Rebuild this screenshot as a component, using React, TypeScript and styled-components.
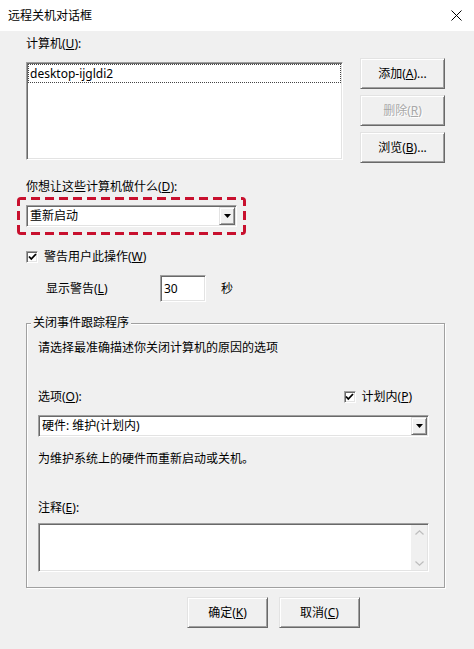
import React from "react";
import styled, { createGlobalStyle, css } from "styled-components";

const Global = createGlobalStyle`
  html, body { margin: 0; padding: 0; background: #f0f0f0; }
  body {
    font-family: "Noto Sans", "Noto Sans CJK SC", sans-serif;
    font-size: 12px;
    line-height: 16px;
    color: #000;
  }
  * { box-sizing: border-box; }
`;

const sunken = css`
  background: #fff;
  border-style: solid;
  border-width: 1px;
  border-color: #a0a0a0 #fff #fff #a0a0a0;
  box-shadow: inset 1px 1px 0 #696969, inset -1px -1px 0 #e3e3e3;
`;

const raised = css`
  background: #f0f0f0;
  border-style: solid;
  border-width: 1px;
  border-color: #e3e3e3 #696969 #696969 #e3e3e3;
  box-shadow: inset 1px 1px 0 #fff, inset -1px -1px 0 #a0a0a0;
`;

const RED = "#c8102e";
const dashH = `repeating-linear-gradient(90deg, ${RED} 0 9px, transparent 9px 14px)`;
const dashV = `repeating-linear-gradient(180deg, ${RED} 0 9px, transparent 9px 14px)`;

const Window = styled.div`
  width: 474px;
  height: 649px;
  display: flex;
  flex-direction: column;
  background: #f0f0f0;
  overflow: hidden;
`;

const TitleBar = styled.div`
  height: 31px;
  flex-shrink: 0;
  background: #fff;
  display: flex;
  align-items: center;
  justify-content: space-between;
  padding: 0 12px 0 8px;
`;

const Title = styled.span`
  font-size: 12px;
`;

const Body = styled.div`
  display: flex;
  flex-direction: column;
  padding: 5px 0 0 26px;
`;

const Label = styled.div<{ $mt?: number }>`
  margin-top: ${(p) => p.$mt ?? 0}px;
  white-space: nowrap;
`;

const TopRow = styled.div`
  display: flex;
  margin-top: 6px;
`;

const ListBox = styled.div`
  ${sunken};
  width: 317px;
  height: 98px;
  margin-top: 4px;
  padding: 1px 1px 0 1px;
`;

const ListItem = styled.div`
  height: 19px;
  border: 1px dotted #444;
  padding-left: 1px;
  line-height: 17px;
`;

const ButtonCol = styled.div`
  display: flex;
  flex-direction: column;
  gap: 6px;
  margin-left: 17px;
`;

const Button = styled.button<{ $w?: number; $disabled?: boolean }>`
  ${raised};
  width: ${(p) => p.$w ?? 85}px;
  height: 31px;
  padding: 0;
  font: inherit;
  font-size: 12px;
  color: ${(p) => (p.$disabled ? "#a8a8a8" : "#000")};
  text-shadow: ${(p) => (p.$disabled ? "1px 1px 0 #fff" : "none")};
  display: flex;
  align-items: center;
  justify-content: center;
  cursor: default;
`;

const Highlight = styled.div`
  margin-top: 2px;
  margin-left: -9px;
  width: 229px;
  border-radius: 4px;
  padding: 8px 9px;
  background:
    ${dashH} top left / 100% 3px no-repeat,
    ${dashH} bottom left / 100% 3px no-repeat,
    ${dashV} top left / 3px 100% no-repeat,
    ${dashV} top right / 3px 100% no-repeat;
`;

const Combo = styled.div<{ $w?: string }>`
  ${sunken};
  width: ${(p) => p.$w ?? "211px"};
  height: 22px;
  display: flex;
  align-items: center;
  justify-content: space-between;
  padding-left: 3px;
`;

const DropBtn = styled.div`
  ${raised};
  width: 16px;
  height: 18px;
  margin-right: 1px;
  display: flex;
  align-items: center;
  justify-content: center;
`;

const CheckRow = styled.label<{ $mt?: number; $mr?: number }>`
  display: flex;
  align-items: center;
  gap: 6px;
  margin-top: ${(p) => p.$mt ?? 0}px;
  margin-right: ${(p) => p.$mr ?? 0}px;
  white-space: nowrap;
`;

const CheckBox = styled.span`
  ${sunken};
  width: 12px;
  height: 12px;
  display: flex;
  align-items: center;
  justify-content: center;
`;

const WarnRow = styled.div`
  display: flex;
  align-items: center;
  margin-top: 10px;
  padding-left: 20px;
`;

const WarnLabel = styled.span`
  width: 114px;
`;

const NumInput = styled.div`
  ${sunken};
  width: 46px;
  height: 27px;
  display: flex;
  align-items: center;
  padding-left: 3px;
`;

const Unit = styled.span`
  margin-left: 15px;
`;

const Group = styled.fieldset`
  margin: 13px 0 0 0;
  min-width: 0;
  width: 419px;
  padding: 0 15px 15px 11px;
  border: 1px solid #a0a0a0;
  box-shadow: 1px 1px 0 #fff, inset 1px 1px 0 #fff;
`;

const Legend = styled.legend`
  padding: 0 2px;
  margin-left: -7px;
  background: #f0f0f0;
  line-height: 16px;
`;

const OptRow = styled.div`
  display: flex;
  align-items: center;
  justify-content: space-between;
  margin-top: 33px;
`;

const SelectWrap = styled.div`
  margin-top: 10px;
`;

const NoteBox = styled.div`
  ${sunken};
  margin-top: 7px;
  height: 49px;
  display: flex;
  justify-content: flex-end;
`;

const ScrollBar = styled.div`
  width: 16px;
  margin: 1px 1px 1px 0;
  background: #f0f0f0;
  display: flex;
  flex-direction: column;
  justify-content: space-between;
  align-items: center;
  padding: 5px 0 4px;
`;

const BottomRow = styled.div`
  display: flex;
  gap: 11px;
  margin-top: 9px;
  margin-left: 161px;
`;

const Arrow = () => (
  <svg width="7" height="4" viewBox="0 0 7 4">
    <polygon points="0,0 7,0 3.5,4" fill="#000" />
  </svg>
);

const Check = () => (
  <svg width="9" height="8" viewBox="0 0 9 8">
    <path d="M1 3.5 L3.3 6 L8 1" stroke="#000" strokeWidth="1.8" fill="none" />
  </svg>
);

const Chevron = ({ up }: { up?: boolean }) => (
  <svg width="9" height="5" viewBox="0 0 9 5">
    <path
      d={up ? "M0.5 4.5 L4.5 0.8 L8.5 4.5" : "M0.5 0.5 L4.5 4.2 L8.5 0.5"}
      stroke="#bdbdbd"
      strokeWidth="1.2"
      fill="none"
    />
  </svg>
);

const CloseIcon = () => (
  <svg width="11" height="11" viewBox="0 0 11 11">
    <path d="M0.5 0.5 L10.5 10.5 M10.5 0.5 L0.5 10.5" stroke="#000" strokeWidth="1" />
  </svg>
);

export default function App() {
  return (
    <>
      <Global />
      <Window>
        <TitleBar>
          <Title>远程关机对话框</Title>
          <CloseIcon />
        </TitleBar>
        <Body>
          <Label>
            计算机(<u>U</u>):
          </Label>
          <TopRow>
            <ListBox>
              <ListItem>desktop-ijgldi2</ListItem>
            </ListBox>
            <ButtonCol>
              <Button>
                添加(<u>A</u>)...
              </Button>
              <Button $disabled>
                删除(<u>R</u>)
              </Button>
              <Button>
                浏览(<u>B</u>)...
              </Button>
            </ButtonCol>
          </TopRow>
          <Label $mt={16}>
            你想让这些计算机做什么(<u>D</u>):
          </Label>
          <Highlight>
            <Combo>
              <span>重新启动</span>
              <DropBtn>
                <Arrow />
              </DropBtn>
            </Combo>
          </Highlight>
          <CheckRow $mt={14}>
            <CheckBox>
              <Check />
            </CheckBox>
            <span>
              警告用户此操作(<u>W</u>)
            </span>
          </CheckRow>
          <WarnRow>
            <WarnLabel>
              显示警告(<u>L</u>)
            </WarnLabel>
            <NumInput>30</NumInput>
            <Unit>秒</Unit>
          </WarnRow>
          <Group>
            <Legend>关闭事件跟踪程序</Legend>
            <Label $mt={9}>请选择最准确描述你关闭计算机的原因的选项</Label>
            <OptRow>
              <span>
                选项(<u>O</u>):
              </span>
              <CheckRow $mr={17}>
                <CheckBox>
                  <Check />
                </CheckBox>
                <span>
                  计划内(<u>P</u>)
                </span>
              </CheckRow>
            </OptRow>
            <SelectWrap>
              <Combo $w="100%">
                <span>硬件: 维护(计划内)</span>
                <DropBtn>
                  <Arrow />
                </DropBtn>
              </Combo>
            </SelectWrap>
            <Label $mt={14}>为维护系统上的硬件而重新启动或关机。</Label>
            <Label $mt={33}>
              注释(<u>E</u>):
            </Label>
            <NoteBox>
              <ScrollBar>
                <Chevron up />
                <Chevron />
              </ScrollBar>
            </NoteBox>
          </Group>
          <BottomRow>
            <Button $w={81}>
              确定(<u>K</u>)
            </Button>
            <Button $w={81}>
              取消(<u>C</u>)
            </Button>
          </BottomRow>
        </Body>
      </Window>
    </>
  );
}
